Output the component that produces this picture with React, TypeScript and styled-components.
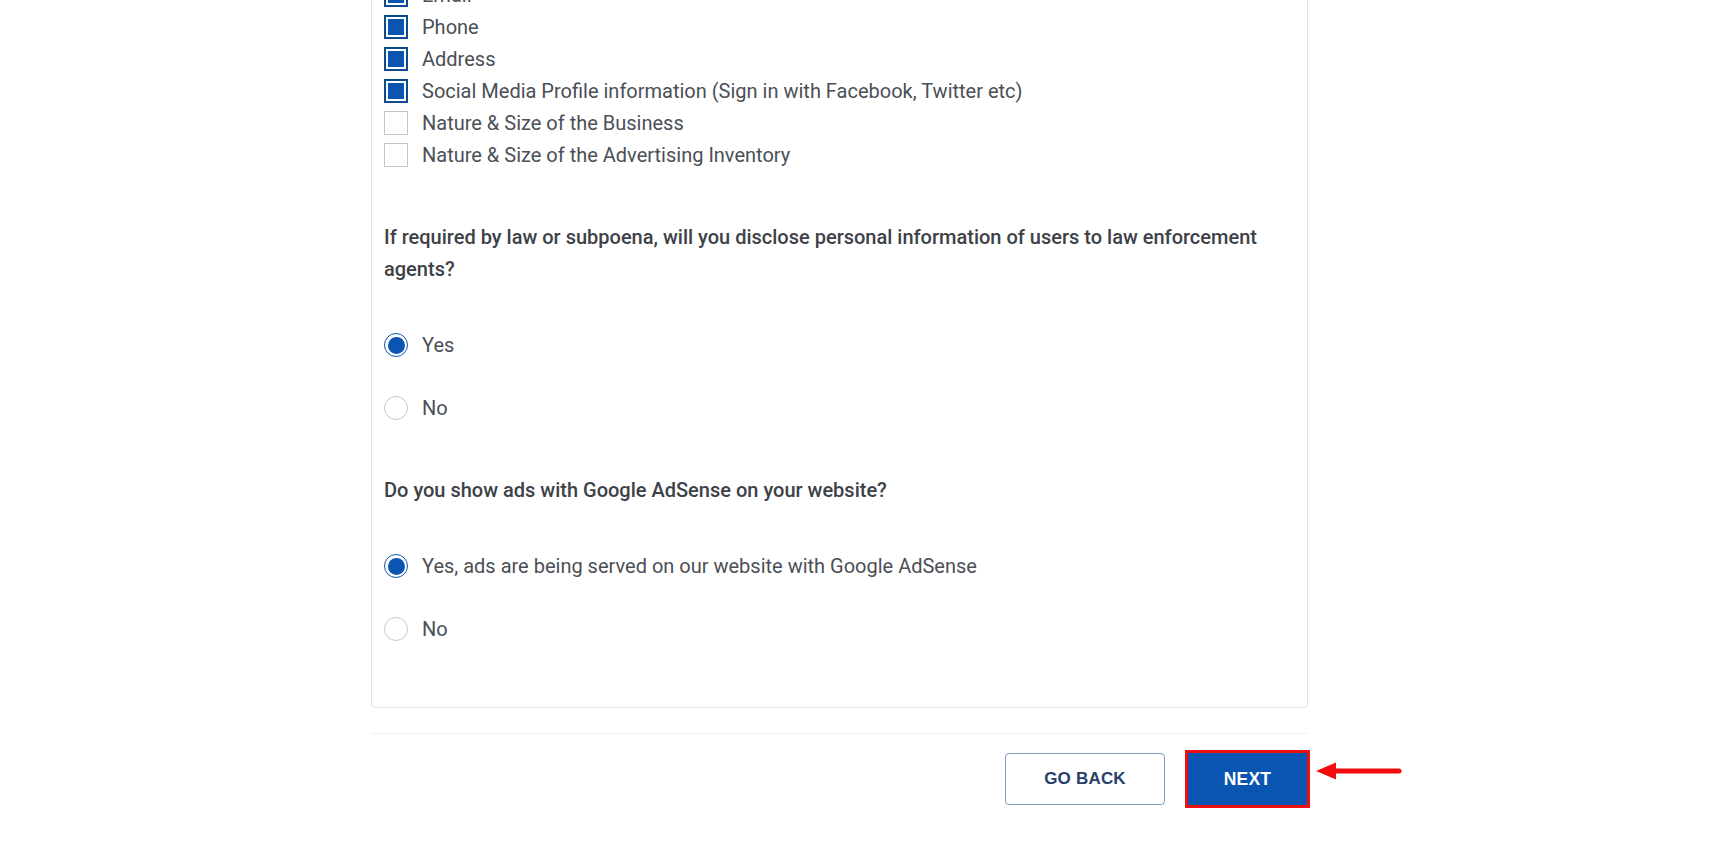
import React from "react";
import styled, { createGlobalStyle } from "styled-components";

const GlobalStyle = createGlobalStyle`
  html, body {
    margin: 0;
    padding: 0;
    background: #ffffff;
    overflow: hidden;
  }
  body {
    font-family: Roboto, "Noto Sans", Arial, sans-serif;
    height: 850px;
  }
  * { box-sizing: border-box; }
`;

const Page = styled.div`
  padding-left: 371px;
  width: 1718px;
`;

const Column = styled.div`
  width: 937px;
  display: flex;
  flex-direction: column;
`;

const Card = styled.section`
  margin-top: -22px;
  border: 1px solid #e3e4e6;
  border-radius: 0 0 4px 4px;
  padding: 0 12px 62px 12px;
  display: flex;
  flex-direction: column;
`;

const CheckList = styled.div`
  display: flex;
  flex-direction: column;
`;

const OptionRow = styled.label`
  height: 32px;
  display: flex;
  align-items: center;
  gap: 14px;
  font-size: 20px;
  line-height: 32px;
  color: #4b4f56;
  cursor: pointer;
`;

const CheckBox = styled.span<{ $checked?: boolean }>`
  width: 24px;
  height: 24px;
  flex: 0 0 24px;
  display: flex;
  align-items: center;
  justify-content: center;
  border: ${(p) => (p.$checked ? "2px solid #0d4c93" : "1px solid #c4c7cc")};
  background: #ffffff;
  &::after {
    content: "";
    display: ${(p) => (p.$checked ? "block" : "none")};
    width: 16px;
    height: 16px;
    background: #0a55b2;
  }
`;

const RadioDot = styled.span<{ $checked?: boolean }>`
  width: 24px;
  height: 24px;
  flex: 0 0 24px;
  border-radius: 50%;
  display: flex;
  align-items: center;
  justify-content: center;
  border: ${(p) => (p.$checked ? "1.5px solid #0a55b2" : "1px solid #c6c9ce")};
  background: #ffffff;
  &::after {
    content: "";
    display: ${(p) => (p.$checked ? "block" : "none")};
    width: 17px;
    height: 17px;
    border-radius: 50%;
    background: #0a55b2;
  }
`;

const Question = styled.p`
  margin: 50px 0 0 0;
  font-size: 20px;
  line-height: 32px;
  font-weight: 500;
  color: #3d4148;
  padding-right: 24px;
`;

const RadioList = styled.div`
  margin-top: 44px;
  display: flex;
  flex-direction: column;
  gap: 31px;
`;

const Divider = styled.hr`
  margin: 25px 0 0 0;
  border: none;
  height: 1px;
  background: #f0f0f1;
`;

const Actions = styled.div`
  margin-top: 19px;
  display: flex;
  justify-content: flex-end;
  align-items: center;
  gap: 23px;
`;

const BaseButton = styled.button`
  height: 52px;
  font-family: "Liberation Sans", Arial, sans-serif;
  font-weight: 700;
  font-size: 17px;
  letter-spacing: 0.2px;
  text-transform: uppercase;
  cursor: pointer;
  display: flex;
  align-items: center;
  justify-content: center;
`;

const GhostButton = styled(BaseButton)`
  width: 160px;
  border: 1px solid #7d9bc3;
  border-radius: 4px;
  background: #ffffff;
  color: #283e6c;
`;

const PrimaryWrap = styled.div`
  position: relative;
  margin-right: 1px;
`;

const PrimaryButton = styled(BaseButton)`
  width: 119px;
  border: none;
  border-radius: 0;
  background: #0a55b1;
  color: #ffffff;
  font-size: 17.5px;
  outline: 3px solid #ee1010;
  outline-offset: 0;
`;

const Pointer = styled.svg`
  position: absolute;
  left: 128px;
  top: 8px;
  width: 88px;
  height: 20px;
  overflow: visible;
`;

const checks = [
  { label: "Email", checked: true },
  { label: "Phone", checked: true },
  { label: "Address", checked: true },
  { label: "Social Media Profile information (Sign in with Facebook, Twitter etc)", checked: true },
  { label: "Nature & Size of the Business", checked: false },
  { label: "Nature & Size of the Advertising Inventory", checked: false },
];

const questions = [
  {
    q: "If required by law or subpoena, will you disclose personal information of users to law enforcement agents?",
    options: ["Yes", "No"],
  },
  {
    q: "Do you show ads with Google AdSense on your website?",
    options: ["Yes, ads are being served on our website with Google AdSense", "No"],
  },
];

export default function App() {
  return (
    <>
      <GlobalStyle />
      <Page>
        <Column>
          <Card>
            <CheckList>
              {checks.map((c) => (
                <OptionRow key={c.label}>
                  <CheckBox $checked={c.checked} />
                  <span>{c.label}</span>
                </OptionRow>
              ))}
            </CheckList>
            {questions.map((item) => (
              <React.Fragment key={item.q}>
                <Question>{item.q}</Question>
                <RadioList>
                  {item.options.map((o, i) => (
                    <OptionRow key={o}>
                      <RadioDot $checked={i === 0} />
                      <span>{o}</span>
                    </OptionRow>
                  ))}
                </RadioList>
              </React.Fragment>
            ))}
          </Card>
          <Divider />
          <Actions>
            <GhostButton>Go Back</GhostButton>
            <PrimaryWrap>
              <PrimaryButton>Next</PrimaryButton>
              <Pointer viewBox="0 0 88 20">
                <polygon points="0,10 20,1.5 20,18.5" fill="#f20c0c" />
                <line x1="18" y1="10" x2="83" y2="10" stroke="#f20c0c" strokeWidth="5" strokeLinecap="round" />
              </Pointer>
            </PrimaryWrap>
          </Actions>
        </Column>
      </Page>
    </>
  );
}
